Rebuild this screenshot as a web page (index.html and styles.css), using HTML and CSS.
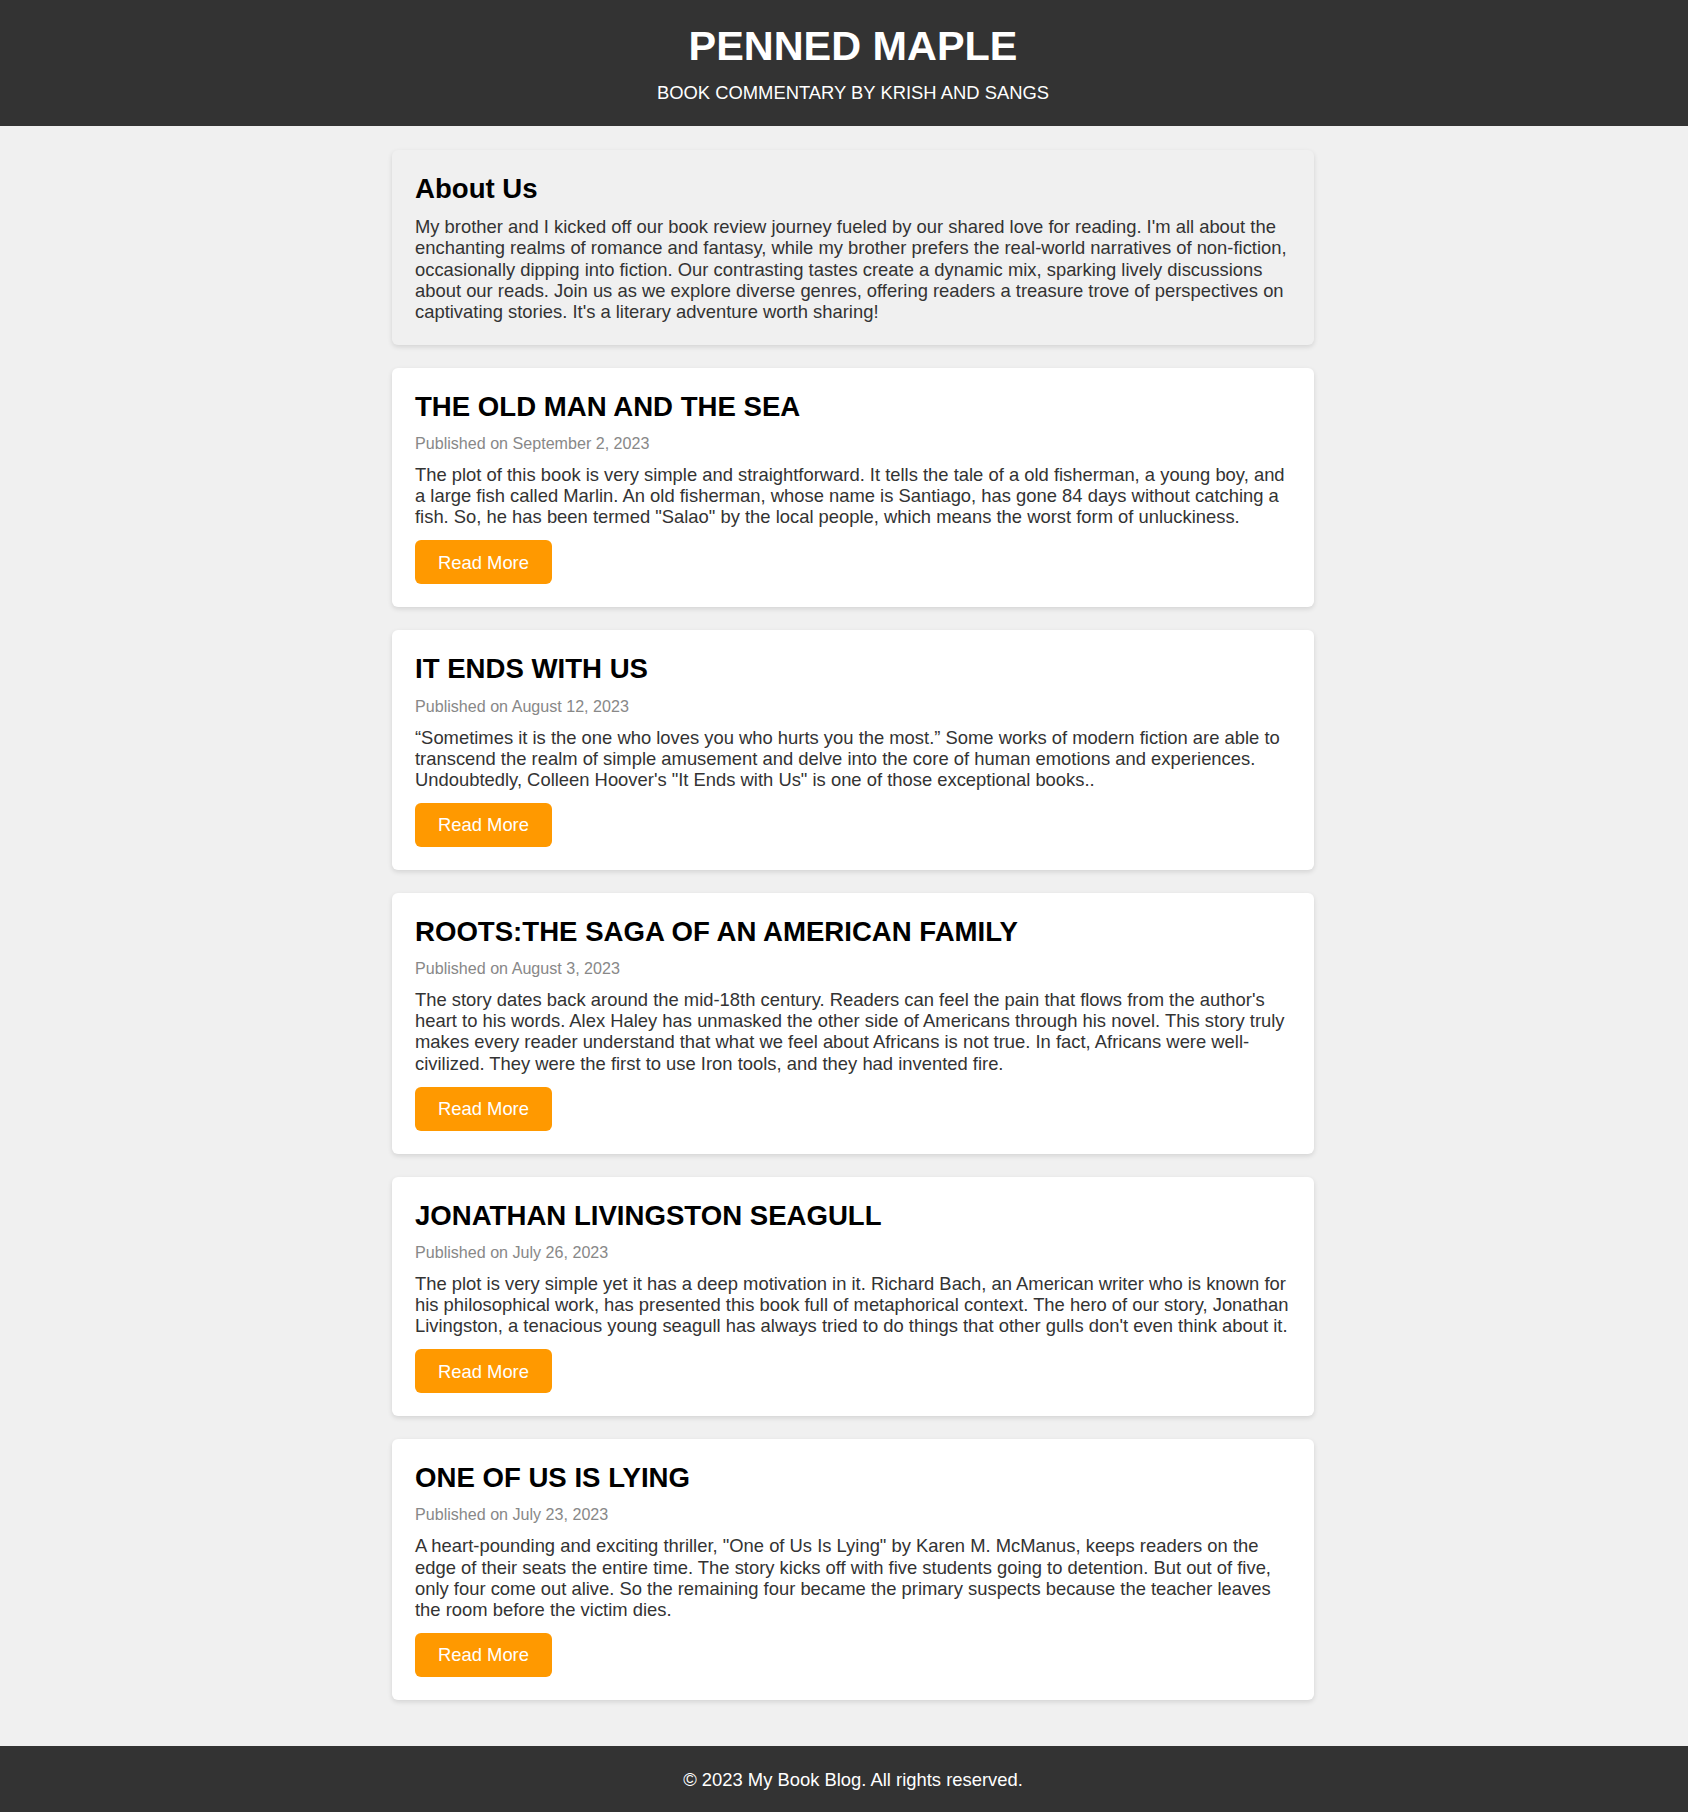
FILE: index.html
```html
<!DOCTYPE html>
<html lang="en">
<head>
<meta charset="UTF-8">
<title>Penned Maple</title>
<link rel="stylesheet" href="styles.css">
</head>
<body>
<header class="site-header">
  <h1 class="site-title">PENNED MAPLE</h1>
  <p class="site-tagline">BOOK COMMENTARY BY KRISH AND SANGS</p>
</header>

<main class="content">
  <section class="card card-about">
    <h2 class="card-title">About Us</h2>
    <p class="card-text">My brother and I kicked off our book review journey fueled by our shared love for reading. I'm all about the enchanting realms of romance and fantasy, while my brother prefers the real-world narratives of non-fiction, occasionally dipping into fiction. Our contrasting tastes create a dynamic mix, sparking lively discussions about our reads. Join us as we explore diverse genres, offering readers a treasure trove of perspectives on captivating stories. It's a literary adventure worth sharing!</p>
  </section>

  <article class="card">
    <h2 class="card-title">THE OLD MAN AND THE SEA</h2>
    <p class="card-date">Published on September 2, 2023</p>
    <p class="card-text">The plot of this book is very simple and straightforward. It tells the tale of a old fisherman, a young boy, and a large fish called Marlin. An old fisherman, whose name is Santiago, has gone 84 days without catching a fish. So, he has been termed "Salao" by the local people, which means the worst form of unluckiness.</p>
    <a class="btn" href="#">Read More</a>
  </article>

  <article class="card">
    <h2 class="card-title">IT ENDS WITH US</h2>
    <p class="card-date">Published on August 12, 2023</p>
    <p class="card-text">“Sometimes it is the one who loves you who hurts you the most.” Some works of modern fiction are able to transcend the realm of simple amusement and delve into the core of human emotions and experiences. Undoubtedly, Colleen Hoover's "It Ends with Us" is one of those exceptional books..</p>
    <a class="btn" href="#">Read More</a>
  </article>

  <article class="card">
    <h2 class="card-title">ROOTS:THE SAGA OF AN AMERICAN FAMILY</h2>
    <p class="card-date">Published on August 3, 2023</p>
    <p class="card-text">The story dates back around the mid-18th century. Readers can feel the pain that flows from the author's heart to his words. Alex Haley has unmasked the other side of Americans through his novel. This story truly makes every reader understand that what we feel about Africans is not true. In fact, Africans were well-civilized. They were the first to use Iron tools, and they had invented fire.</p>
    <a class="btn" href="#">Read More</a>
  </article>

  <article class="card">
    <h2 class="card-title">JONATHAN LIVINGSTON SEAGULL</h2>
    <p class="card-date">Published on July 26, 2023</p>
    <p class="card-text">The plot is very simple yet it has a deep motivation in it. Richard Bach, an American writer who is known for his philosophical work, has presented this book full of metaphorical context. The hero of our story, Jonathan Livingston, a tenacious young seagull has always tried to do things that other gulls don't even think about it.</p>
    <a class="btn" href="#">Read More</a>
  </article>

  <article class="card">
    <h2 class="card-title">ONE OF US IS LYING</h2>
    <p class="card-date">Published on July 23, 2023</p>
    <p class="card-text">A heart-pounding and exciting thriller, "One of Us Is Lying" by Karen M. McManus, keeps readers on the edge of their seats the entire time. The story kicks off with five students going to detention. But out of five, only four come out alive. So the remaining four became the primary suspects because the teacher leaves the room before the victim dies.</p>
    <a class="btn" href="#">Read More</a>
  </article>
</main>

<footer class="site-footer">
  <p class="footer-text">© 2023 My Book Blog. All rights reserved.</p>
</footer>
</body>
</html>
```

FILE: styles.css
```css
* {
  box-sizing: border-box;
}

body {
  margin: 0;
  background: #f0f0f0;
  font-family: "Liberation Sans", Arial, sans-serif;
  color: #333;
}

.site-header {
  background: #333;
  color: #fff;
  text-align: center;
  padding: 23px 0 23px 18px;
}

.site-title {
  margin: 0;
  font-size: 41.4px;
  font-weight: bold;
  line-height: 47.6px;
}

.site-tagline {
  margin: 11.5px 0 0;
  font-size: 18.4px;
  line-height: 21.1px;
}

.content {
  padding: 24px 0 23px 18px;
}

.card {
  width: 922px;
  margin: 0 auto 23px;
  padding: 23px;
  background: #fff;
  border-radius: 6px;
  box-shadow: 0 2px 5px rgba(0, 0, 0, 0.12);
}

.card-about {
  background: #f0f0f0;
}

.card-title {
  margin: 0 0 11.5px;
  font-size: 27.6px;
  font-weight: bold;
  line-height: 31.7px;
  color: #000;
}

.card-date {
  margin: 0 0 11.5px;
  font-size: 16.1px;
  line-height: 18.5px;
  color: #888;
}

.card-text {
  margin: 0 0 13px;
  font-size: 18.4px;
  line-height: 21.1px;
  color: #333;
}

.card-about .card-text {
  margin: 0;
}

.btn {
  display: inline-block;
  padding: 11.5px 23px;
  font-size: 18.4px;
  line-height: 21.1px;
  color: #fff;
  background: #ff9900;
  border-radius: 6px;
  text-decoration: none;
  vertical-align: top;
}

.site-footer {
  background: #333;
  color: #fff;
  text-align: center;
  padding: 23px 0 23px 18px;
}

.footer-text {
  margin: 0;
  font-size: 18.4px;
  line-height: 21.1px;
}
```
